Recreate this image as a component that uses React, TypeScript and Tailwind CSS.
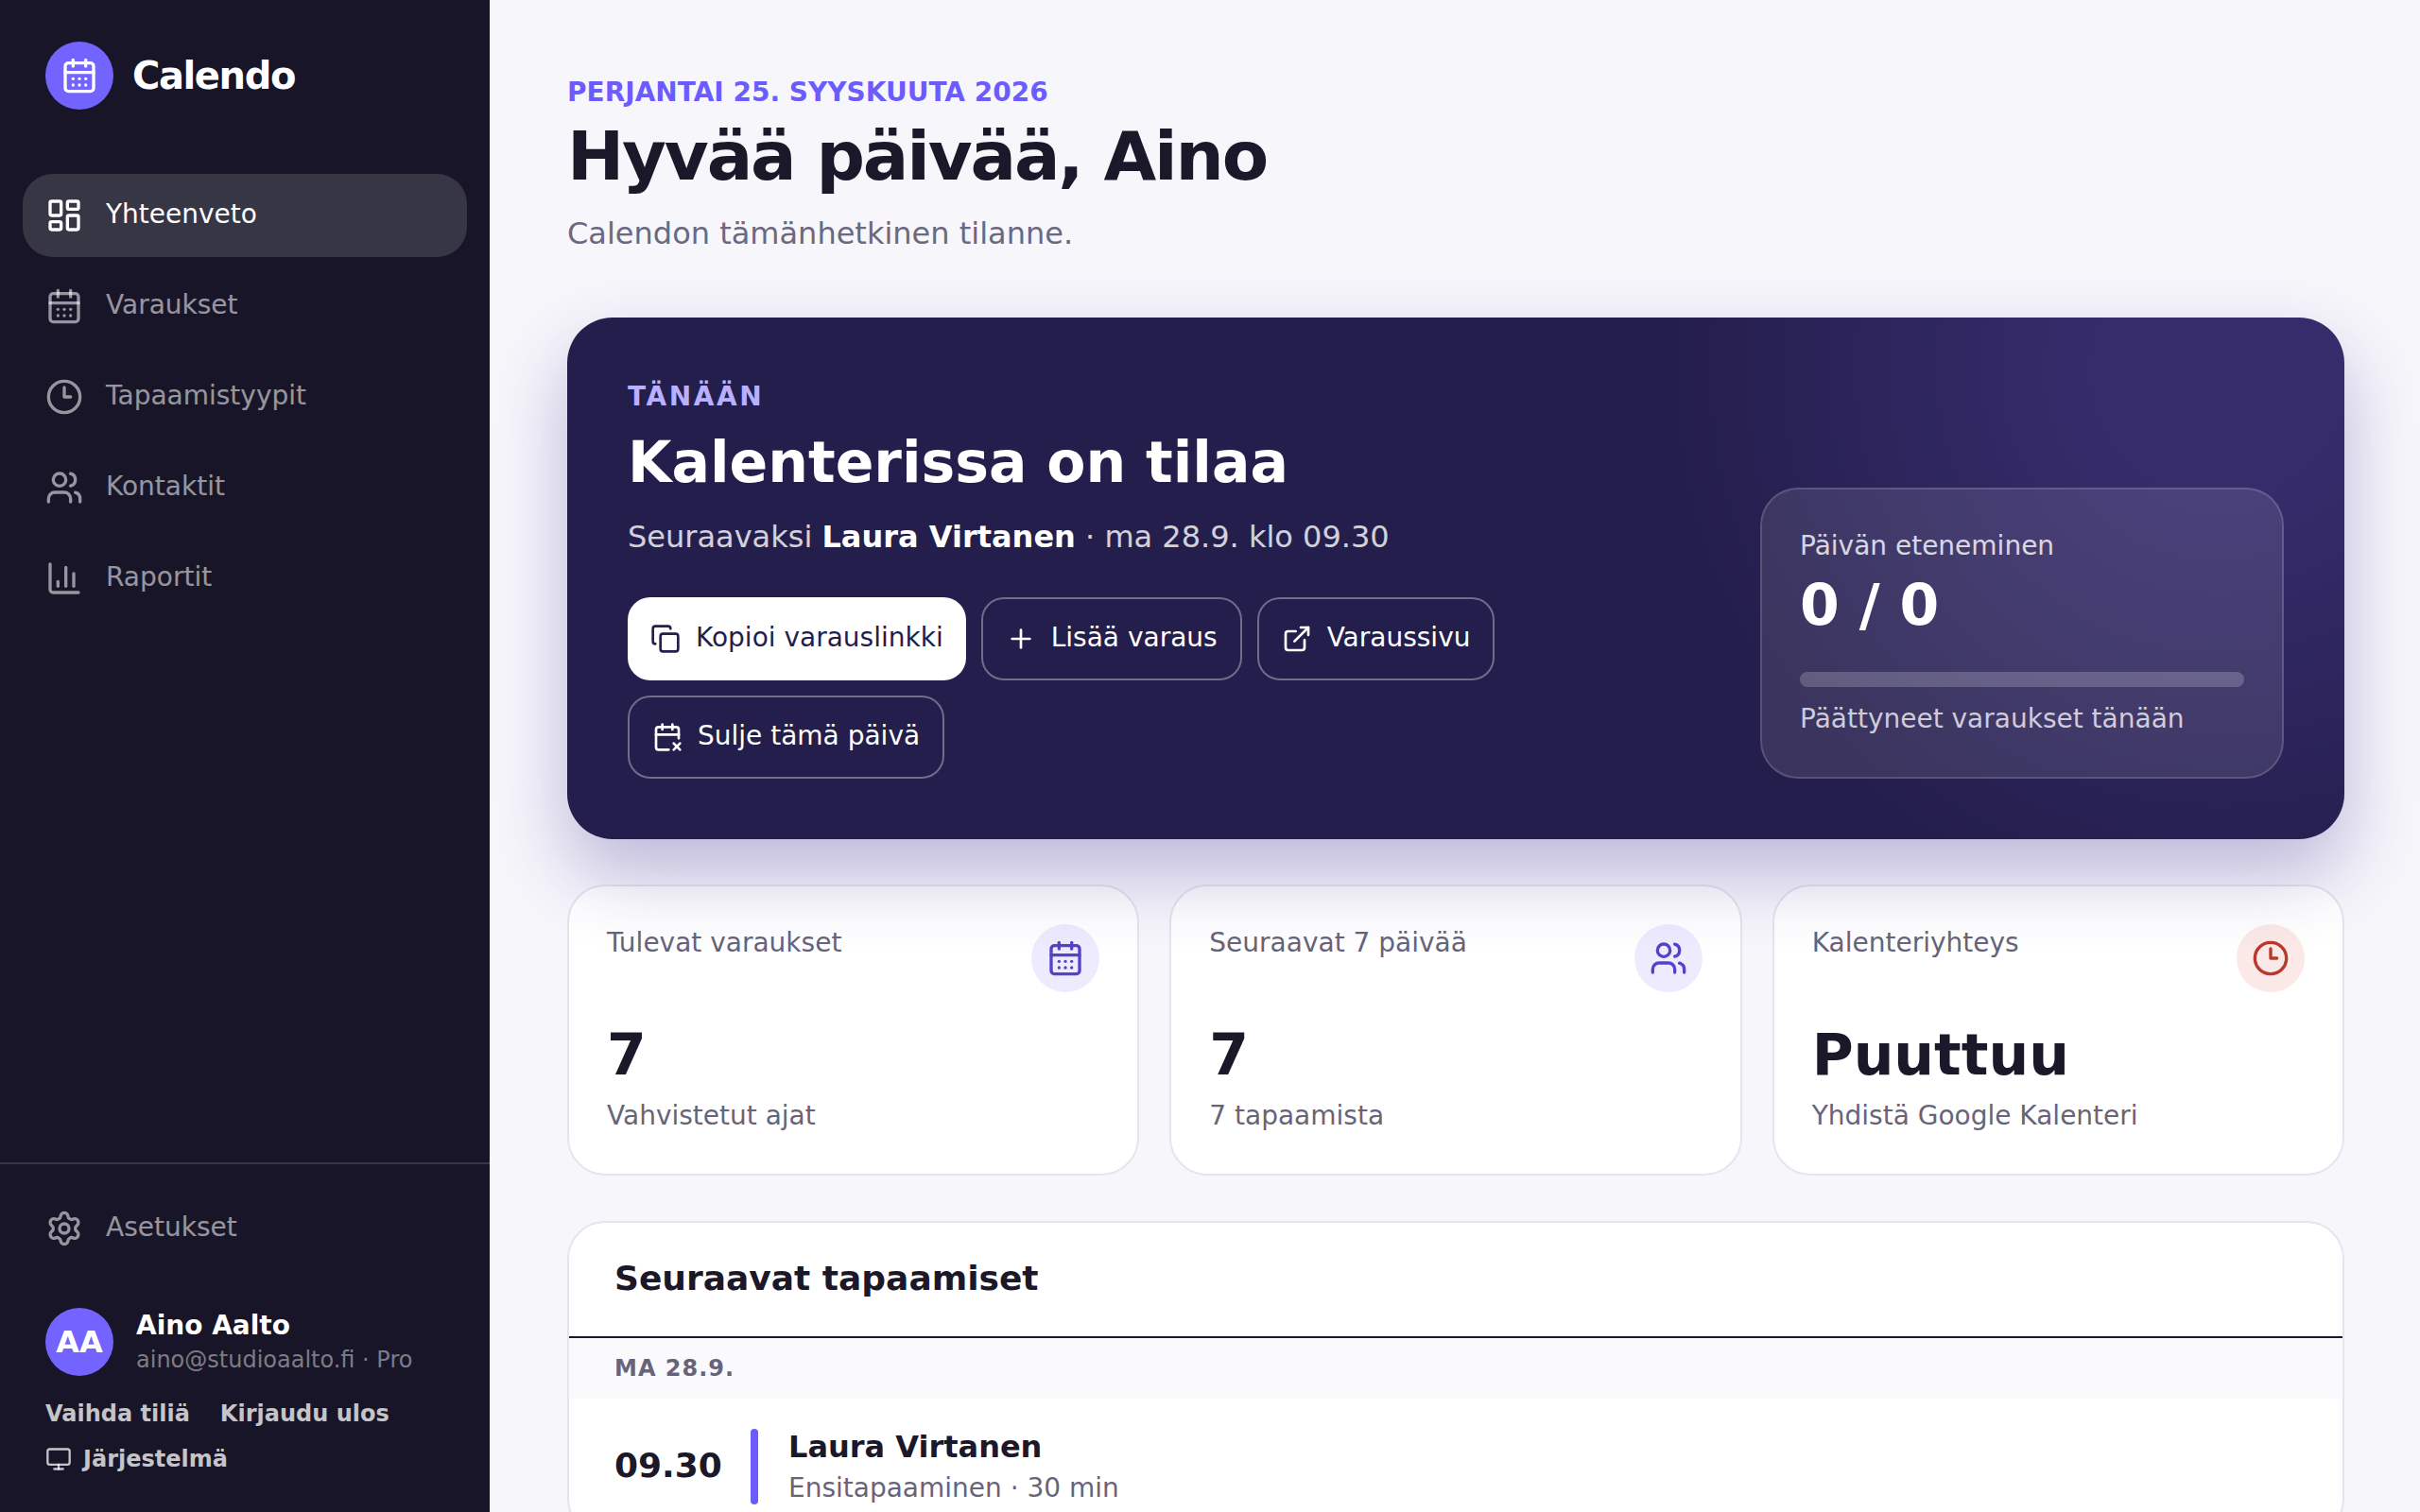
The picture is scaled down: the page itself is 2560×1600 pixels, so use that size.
import React from "react";
import { CalendarDays, CalendarX2, ChartColumn, Copy, ExternalLink, LayoutDashboard, Monitor, Plus, Settings, Users } from "lucide-react";

function ClockIcon({ size = 40 }: { size?: number }) {
  return (
    <svg width={size} height={size} viewBox="0 0 24 24" fill="none" stroke="currentColor" strokeWidth={2} strokeLinecap="round" strokeLinejoin="round">
      <circle cx="12" cy="12" r="10" />
      <path d="M12 6v6h4" />
    </svg>
  );
}

const nav = [
  { label: "Yhteenveto", Icon: LayoutDashboard, active: true },
  { label: "Varaukset", Icon: CalendarDays },
  { label: "Tapaamistyypit", Icon: ClockIcon },
  { label: "Kontaktit", Icon: Users },
  { label: "Raportit", Icon: ChartColumn },
];

function NavItem({ label, Icon, active }: { label: string; Icon: any; active?: boolean }) {
  return (
    <div className={active ? "flex h-[88px] items-center gap-6 rounded-[32px] bg-white/[0.14] px-6 text-white" : "flex h-[88px] items-center gap-6 rounded-[32px] px-6 text-white/55"}>
      <Icon size={40} />
      <span className="mb-[3px] text-[28px] leading-none">{label}</span>
    </div>
  );
}

function Ghost({ Icon, label }: { Icon: any; label: string }) {
  return (
    <div className="flex h-[88px] items-center gap-4 rounded-3xl border-2 border-white/35 px-6 text-[28px] text-white">
      <Icon size={32} />
      <span className="mb-[2px]">{label}</span>
    </div>
  );
}

function Stat({ label, value, sub, Icon, tone }: { label: string; value: string; sub: string; Icon: any; tone: string }) {
  return (
    <div className="h-[308px] rounded-[40px] border-2 border-[#e6e4ef] bg-white px-[40px] pt-[40px]">
      <div className="flex justify-between">
        <span className="pt-[2px] text-[28px] leading-[36px] text-[#67647a]">{label}</span>
        <span className={tone === "red" ? "flex h-[72px] w-[72px] items-center justify-center rounded-full bg-[#fbe9e7] text-[#b93a2d]" : "flex h-[72px] w-[72px] items-center justify-center rounded-full bg-[#eeebff] text-[#5244c9]"}>
          <Icon size={40} />
        </span>
      </div>
      <div className="mt-[26px] text-[60px] font-bold leading-[80px] text-[#1a1829]">{value}</div>
      <div className="mt-[5px] text-[28px] leading-[40px] text-[#67647a]">{sub}</div>
    </div>
  );
}

export default function App() {
  return (
    <div className="flex h-[1600px] w-[2560px] overflow-hidden bg-[#f7f6fb] font-['DejaVu_Sans',sans-serif]">
      <aside className="flex h-full w-[518px] shrink-0 flex-col bg-[#171527]">
        <div className="flex items-center gap-5 px-12 pt-[44px]">
          <span className="flex h-[72px] w-[72px] items-center justify-center rounded-full bg-[#7364ff] text-white">
            <CalendarDays size={40} />
          </span>
          <span className="text-[40px] font-bold leading-none tracking-[-1.4px] text-white">Calendo</span>
        </div>
        <nav className="mt-[68px] flex flex-col gap-2 px-6">
          {nav.map((n) => (
            <NavItem key={n.label} {...n} />
          ))}
        </nav>
        <div className="mt-auto border-t-2 border-white/15 px-6 pt-6">
          <NavItem label="Asetukset" Icon={Settings} />
          <div className="mt-10 flex items-center gap-6 px-6">
            <span className="flex h-[72px] w-[72px] items-center justify-center rounded-full bg-[#7364ff] text-[32px] font-bold text-white">AA</span>
            <div>
              <div className="text-[28px] font-bold leading-[38px] text-white">Aino Aalto</div>
              <div className="text-[24px] leading-[34px] text-white/45">aino@studioaalto.fi · Pro</div>
            </div>
          </div>
          <div className="mt-[22px] flex gap-8 px-6 text-[24px] font-bold leading-[36px] text-white/75">
            <span>Vaihda tiliä</span>
            <span>Kirjaudu ulos</span>
          </div>
          <div className="mt-3 flex items-center gap-3 px-6 pb-[38px] text-[24px] font-bold leading-[36px] text-white/75">
            <Monitor size={28} />
            <span>Järjestelmä</span>
          </div>
        </div>
      </aside>

      <main className="h-full min-w-0 flex-1 overflow-hidden pl-[82px] pr-[80px] pt-[78px]">
        <div className="text-[28px] font-bold leading-10 text-[#6c5cff]">PERJANTAI 25. SYYSKUUTA 2026</div>
        <h1 className="mt-[3px] text-[72px] font-bold leading-[88px] tracking-[-2.16px] text-[#1a1829]">Hyvää päivää, Aino</h1>
        <p className="mt-[16px] text-[32px] leading-[44px] text-[#6b6880]">Calendon tämänhetkinen tilanne.</p>

        <section className="relative z-10 mt-[67px] flex h-[552px] items-end justify-between rounded-[48px] bg-[#241e4c] bg-[radial-gradient(circle_580px_at_93%_10%,#362c6c_0%,#362c6c_22%,#241e4c_100%)] p-[64px] shadow-[0_36px_80px_rgba(50,35,140,0.3)]">
          <div className="self-start">
            <div className="mt-[2px] text-[28px] font-bold leading-[36px] tracking-[2.6px] text-[#b9b0ff]">TÄNÄÄN</div>
            <div className="mt-[15px] text-[60px] font-bold leading-[72px] text-white">Kalenterissa on tilaa</div>
            <div className="mt-[21px] text-[32px] leading-[44px] text-white/80">
              Seuraavaksi <b className="text-white">Laura Virtanen</b> · ma 28.9. klo 09.30
            </div>
            <div className="mt-[42px] flex w-[960px] flex-wrap gap-4">
              <div className="flex h-[88px] items-center gap-4 rounded-3xl bg-white px-6 text-[28px] text-[#241e4c]">
                <Copy size={32} />
                <span className="mb-[2px]">Kopioi varauslinkki</span>
              </div>
              <Ghost Icon={Plus} label="Lisää varaus" />
              <Ghost Icon={ExternalLink} label="Varaussivu" />
              <Ghost Icon={CalendarX2} label="Sulje tämä päivä" />
            </div>
          </div>
          <div className="h-[308px] w-[554px] rounded-[40px] border-2 border-white/15 bg-white/10 px-[40px] pt-[42px]">
            <div className="text-[28px] leading-[36px] text-white/80">Päivän eteneminen</div>
            <div className="mt-[4px] text-[60px] font-bold leading-[80px] text-white">0 / 0</div>
            <div className="mt-[31px] h-4 rounded-full bg-white/20"></div>
            <div className="mt-[14px] text-[28px] leading-[40px] text-white/75">Päättyneet varaukset tänään</div>
          </div>
        </section>

        <div className="mt-[48px] grid grid-cols-3 gap-8">
          <Stat label="Tulevat varaukset" value="7" sub="Vahvistetut ajat" Icon={CalendarDays} tone="violet" />
          <Stat label="Seuraavat 7 päivää" value="7" sub="7 tapaamista" Icon={Users} tone="violet" />
          <Stat label="Kalenteriyhteys" value="Puuttuu" sub="Yhdistä Google Kalenteri" Icon={ClockIcon} tone="red" />
        </div>

        <section className="mt-[48px] overflow-hidden rounded-[40px] border-2 border-[#e6e4ef] bg-white">
          <div className="flex h-[122px] items-center border-b-2 border-[#1a1829] px-12">
            <h2 className="mb-[2px] text-[36px] font-bold leading-none text-[#1a1829]">Seuraavat tapaamiset</h2>
          </div>
          <div className="flex h-[64px] items-center bg-[#fafafc] px-12 text-[24px] font-bold tracking-[1px] text-[#67647a]">MA 28.9.</div>
          <div className="flex h-[144px] items-center px-12">
            <span className="mb-[2px] w-[144px] text-[36px] font-bold text-[#1a1829]">09.30</span>
            <span className="h-[80px] w-2 rounded-full bg-[#6c5cff]"></span>
            <div className="ml-[32px]">
              <div className="text-[32px] font-bold leading-[44px] text-[#1a1829]">Laura Virtanen</div>
              <div className="mt-[2px] text-[28px] leading-[40px] text-[#67647a]">Ensitapaaminen · 30 min</div>
            </div>
          </div>
        </section>
      </main>
    </div>
  );
}
